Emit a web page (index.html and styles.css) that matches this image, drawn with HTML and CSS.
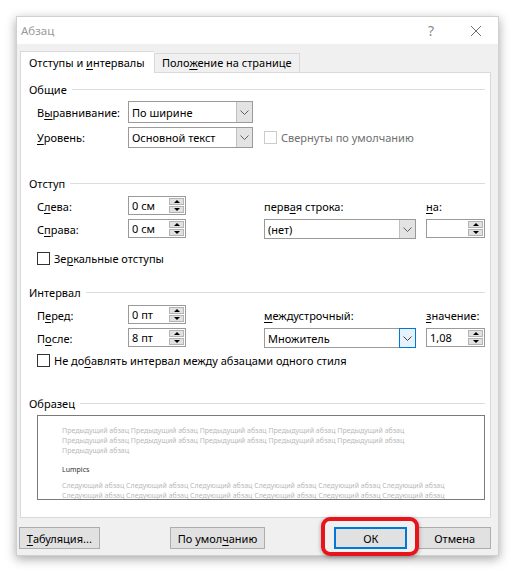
FILE: index.html
```html
<!DOCTYPE html>
<html lang="ru">
<head>
<meta charset="utf-8">
<title>Абзац</title>
<link rel="stylesheet" href="styles.css">
</head>
<body>
<div class="dialog">
  <div class="titlebar">
    <span class="title">Абзац</span>
    <span class="help">?</span>
    <svg class="close" width="12" height="12" viewBox="0 0 12 12"><path d="M1 1 L11 11 M11 1 L1 11" stroke="#6f6f6f" stroke-width="1" fill="none"/></svg>
  </div>
  <div class="body">
    <div class="tabs">
      <div class="tab active">Отступы и <u>и</u>нтервалы</div>
      <div class="tab">Поло<u>ж</u>ение на странице</div>
    </div>
    <div class="panel">
      <div class="heading h-general"><span>Общие</span><i></i></div>
      <div class="grid-general">
        <div class="lbl">В<u>ы</u>равнивание:</div>
        <div class="combo"><span class="cv">По ширине</span><span class="arrow"><svg width="9" height="5" viewBox="0 0 9 5"><path d="M0.5 0.5 L4.5 4.5 L8.5 0.5" stroke="#606060" fill="none"/></svg></span></div>
        <div></div><div></div>
        <div class="lbl"><u>У</u>ровень:</div>
        <div class="combo"><span class="cv">Основной текст</span><span class="arrow"><svg width="9" height="5" viewBox="0 0 9 5"><path d="M0.5 0.5 L4.5 4.5 L8.5 0.5" stroke="#606060" fill="none"/></svg></span></div>
        <div></div>
        <div class="check disabled"><i class="box"></i><span>Свернуты по умолчанию</span></div>
      </div>

      <div class="heading h-indent"><span>Отступ</span><i></i></div>
      <div class="grid-six">
        <div class="lbl">С<u>л</u>ева:</div>
        <div class="spin"><span class="sv">0 см</span><span class="btns"><i class="up"></i><i class="dn"></i></span></div>
        <div></div>
        <div class="lbl">перв<u>а</u>я строка:</div>
        <div></div>
        <div class="lbl"><u>н</u>а:</div>

        <div class="lbl">С<u>п</u>рава:</div>
        <div class="spin"><span class="sv">0 см</span><span class="btns"><i class="up"></i><i class="dn"></i></span></div>
        <div></div>
        <div class="combo"><span class="cv">(нет)</span><span class="arrow"><svg width="9" height="5" viewBox="0 0 9 5"><path d="M0.5 0.5 L4.5 4.5 L8.5 0.5" stroke="#606060" fill="none"/></svg></span></div>
        <div></div>
        <div class="spin"><span class="sv"></span><span class="btns"><i class="up"></i><i class="dn"></i></span></div>
      </div>
      <div class="check c-mirror"><i class="box"></i><span>Зе<u>р</u>кальные отступы</span></div>

      <div class="heading h-spacing"><span>Интервал</span><i></i></div>
      <div class="grid-six">
        <div class="lbl">П<u>е</u>ред:</div>
        <div class="spin"><span class="sv">0 пт</span><span class="btns"><i class="up"></i><i class="dn"></i></span></div>
        <div></div>
        <div class="lbl"><u>м</u>еждустрочный:</div>
        <div></div>
        <div class="lbl"><u>з</u>начение:</div>

        <div class="lbl">П<u>о</u>сле:</div>
        <div class="spin"><span class="sv">8 пт</span><span class="btns"><i class="up"></i><i class="dn"></i></span></div>
        <div></div>
        <div class="combo"><span class="cv">Множитель</span><span class="arrow focus"><svg width="9" height="5" viewBox="0 0 9 5"><path d="M0.5 0.5 L4.5 4.5 L8.5 0.5" stroke="#404040" fill="none"/></svg></span></div>
        <div></div>
        <div class="spin"><span class="sv">1,08</span><span class="btns"><i class="up"></i><i class="dn"></i></span></div>
      </div>
      <div class="check c-nospace"><i class="box"></i><span>Не до<u>б</u>авлять интервал между абзацами одного стиля</span></div>

      <div class="heading h-sample"><span>Образец</span><i></i></div>
      <div class="preview">
        <div class="pl prev">Предыдущий абзац Предыдущий абзац Предыдущий абзац Предыдущий абзац Предыдущий абзац</div>
        <div class="pl prev">Предыдущий абзац Предыдущий абзац Предыдущий абзац Предыдущий абзац Предыдущий абзац</div>
        <div class="pl prev">Предыдущий абзац</div>
        <div class="pl cur">Lumpics</div>
        <div class="pl next">Следующий абзац Следующий абзац Следующий абзац Следующий абзац Следующий абзац Следующий абзац</div>
        <div class="pl next">Следующий абзац Следующий абзац Следующий абзац Следующий абзац Следующий абзац Следующий абзац</div>
      </div>
    </div>
    <div class="buttons">
      <div class="btn b-tabs"><u>Т</u>абуляция...</div>
      <div class="btn b-default">По умол<u>ч</u>анию</div>
      <div class="ok-wrap"><div class="btn b-ok">ОК</div><span class="highlight"></span></div>
      <div class="btn b-cancel">Отмена</div>
    </div>
  </div>
</div>
</body>
</html>
```

FILE: styles.css
```css
* { box-sizing: border-box; }
html, body { margin: 0; padding: 0; background: #ffffff; }
body {
  font-family: "Noto Sans", "Open Sans", sans-serif;
  font-size: 11px;
  color: #000;
  width: 515px;
  height: 572px;
  overflow: hidden;
}
u { text-decoration: underline; text-underline-offset: 2px; }

.dialog {
  position: relative;
  margin: 16px 0 0 16px;
  width: 483px;
  height: 540px;
  background: #f0f0f0;
  border: 1px solid #d0d0d0;
  box-shadow: 0 3px 10px rgba(0,0,0,0.35);
  display: flex;
  flex-direction: column;
}

.titlebar {
  height: 27px;
  background: #ffffff;
  display: flex;
  align-items: center;
  padding-left: 4px;
}
.title { color: #9a9a9a; font-size: 11.5px; flex: 1; }
.help { color: #8a8a8a; font-size: 14px; margin-right: 36px; }
.close { margin-right: 16px; }

.body {
  flex: 1;
  padding: 6px 7px 0 3px;
  display: flex;
  flex-direction: column;
}

.tabs {
  display: flex;
  align-items: flex-end;
  height: 22px;
  position: relative;
  z-index: 1;
}
.tab {
  height: 19px;
  border: 1px solid #d9d9d9;
  border-bottom: none;
  background: #f0f0f0;
  padding: 0 0 0 7px;
  width: 146px;
  line-height: 18px;
  white-space: nowrap;
}
.tab.active {
  height: 22px;
  width: 134px;
  background: #fff;
  border-right: none;
  padding-left: 8px;
  line-height: 22px;
  margin-bottom: -1px;
}

.panel {
  background: #ffffff;
  border: 1px solid #d9d9d9;
  height: 446px;
  padding: 8px 5px 0 8px;
}

.heading {
  display: flex;
  align-items: center;
  height: 16px;
}
.heading i {
  flex: 1;
  border-top: 1px solid #dcdcdc;
  margin-left: 5px;
  margin-top: 1px;
}
.h-indent { margin-top: 27px; }
.h-spacing { margin-top: 17px; }
.h-sample { margin-top: 26px; }

.lbl { display: flex; align-items: center; white-space: nowrap; }

.grid-general {
  margin: 4px 0 0 8px;
  display: grid;
  grid-template-columns: 91px 125px 11px auto;
  grid-template-rows: 22px 21px;
  row-gap: 4px;
}
.grid-six {
  margin: 5px 0 0 8px;
  display: grid;
  grid-template-columns: 91px 58px 78px 152px 10px 59px;
  grid-template-rows: 20px 20px;
  row-gap: 3px;
}

.combo {
  display: flex;
  border: 1px solid #9a9a9a;
  background: #fff;
}
.cv { flex: 1; padding-left: 3px; display: flex; align-items: center; white-space: nowrap; }
.arrow {
  width: 16px;
  background: #e3e3e3;
  border-left: 1px solid #c0c0c0;
  display: flex;
  align-items: center;
  justify-content: center;
}
.arrow.focus {
  background: #e5f1fb;
  border: 1px solid #0078d7;
  margin: -1px -1px -1px 0;
  width: 17px;
}

.spin {
  display: flex;
  border: 1px solid #9a9a9a;
  background: #fff;
  height: 19px;
}
.sv { flex: 1; padding-left: 3px; display: flex; align-items: center; }
.btns {
  width: 16px;
  display: flex;
  flex-direction: column;
  padding: 1px 1px 1px 0;
  gap: 1px;
}
.btns i {
  flex: 1;
  background: #e1e1e1;
  border: 1px solid #b4b4b4;
  display: flex;
  align-items: center;
  justify-content: center;
}
.btns i::after {
  content: "";
  width: 0; height: 0;
  border-left: 3px solid transparent;
  border-right: 3px solid transparent;
}
.btns i.up::after { border-bottom: 3px solid #000; }
.btns i.dn::after { border-top: 3px solid #000; }

.check { display: flex; align-items: center; white-space: nowrap; }
.check .box {
  width: 13px; height: 13px;
  border: 1px solid #333;
  background: #fff;
  margin-right: 4px;
}
.check.disabled { color: #707070; }
.check.disabled .box { border-color: #cccccc; }
.c-mirror { margin: 10px 0 0 8px; height: 18px; }
.c-nospace { margin: 3px 0 0 8px; height: 18px; }

.preview {
  margin: 4px 0 0 8px;
  height: 85px;
  border: 1px solid #7a7a7a;
  background: #fff;
  padding: 10px 0 0 24px;
  overflow: hidden;
}
.pl {
  font-size: 7px;
  line-height: 10px;
  height: 10px;
  white-space: nowrap;
  color: #b9b9b9;
}
.pl.cur { color: #333; margin: 9px 0 6px; }

.buttons {
  display: flex;
  align-items: center;
  margin-top: 9px;
  height: 22px;
}
.btn {
  height: 22px;
  background: #e1e1e1;
  border: 1px solid #adadad;
  display: flex;
  align-items: center;
  justify-content: center;
  white-space: nowrap;
}
.b-tabs { width: 81px; margin-left: -1px; }
.b-default { width: 96px; margin-left: 70px; }
.ok-wrap { position: relative; margin-left: 69px; }
.b-ok { width: 73px; border: 2px solid #0078d7; }
.b-cancel { width: 73px; margin-left: 11px; }
.highlight {
  position: absolute;
  left: -13px; right: -12px; top: -10px; bottom: -7px;
  border: 4px solid #e8141b;
  border-radius: 9px;
  box-shadow: 0 1px 4px rgba(0,0,0,0.35);
}
```
